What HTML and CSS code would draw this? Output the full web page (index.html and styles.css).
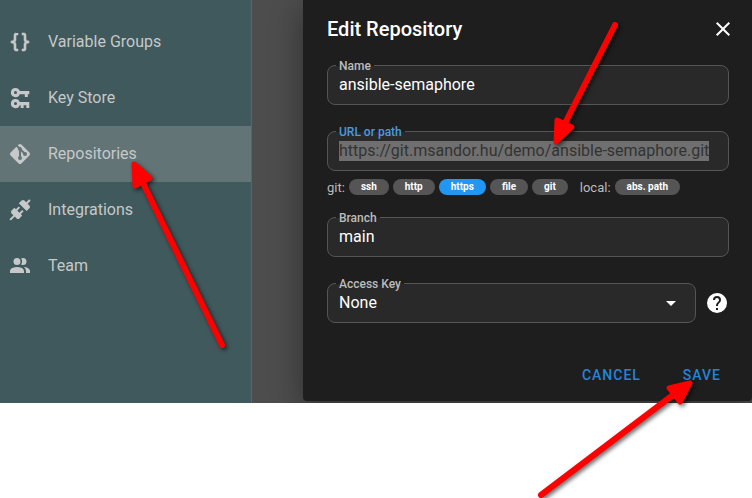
FILE: index.html
```
<!DOCTYPE html>
<html lang="en">
<head>
<meta charset="utf-8">
<title>Edit Repository</title>
<link rel="stylesheet" href="styles.css">
</head>
<body>
<div class="app">
  <nav class="sidebar">
    <a class="nav-item" href="#"><svg class="icon braces" viewBox="0 0 24 24"><path d="M8,3A2,2 0 0,0 6,5V9A2,2 0 0,1 4,11H3V13H4A2,2 0 0,1 6,15V19A2,2 0 0,0 8,21H10V19H8V14A2,2 0 0,0 6,12A2,2 0 0,0 8,10V5H10V3M16,3A2,2 0 0,1 18,5V9A2,2 0 0,0 20,11H21V13H20A2,2 0 0,0 18,15V19A2,2 0 0,1 16,21H14V19H16V14A2,2 0 0,1 18,12A2,2 0 0,1 16,10V5H14V3H16Z"/></svg><span class="nav-text">Variable Groups</span></a>
    <a class="nav-item" href="#"><svg class="icon" viewBox="0 0 24 24"><path fill-rule="evenodd" d="M7.5,2A4.6,4.6 0 0,1 11.8,5H21.3V8.2H19.8V11H16.8V8.2H11.8A4.6,4.6 0 1,1 7.5,2M7.5,5.1A1.5,1.5 0 0,0 7.5,8.1A1.5,1.5 0 0,0 7.5,5.1M7.5,13A4.6,4.6 0 0,1 11.8,16H21.3V22H18.3V19.2H15.6V22H12.7V19.2H11.8A4.6,4.6 0 1,1 7.5,13M7.5,16.1A1.5,1.5 0 0,0 7.5,19.1A1.5,1.5 0 0,0 7.5,16.1Z"/></svg><span class="nav-text">Key Store</span></a>
    <a class="nav-item active" href="#"><svg class="icon" viewBox="0 0 24 24"><path d="M2.6,10.59L8.38,4.8L10.07,6.5C9.83,7.35 10.22,8.28 11,8.73V14.27C10.4,14.61 10,15.26 10,16A2,2 0 0,0 12,18A2,2 0 0,0 14,16C14,15.26 13.6,14.61 13,14.27V9.41L15.07,11.5C15,11.65 15,11.82 15,12A2,2 0 0,0 17,14A2,2 0 0,0 19,12A2,2 0 0,0 17,10C16.82,10 16.65,10 16.5,10.07L13.93,7.5C14.19,6.57 13.71,5.55 12.78,5.16C12.35,5 11.9,4.96 11.5,5.07L9.8,3.38L10.59,2.6C11.37,1.81 12.63,1.81 13.41,2.6L21.4,10.59C22.19,11.37 22.19,12.63 21.4,13.41L13.41,21.4C12.63,22.19 11.37,22.19 10.59,21.4L2.6,13.41C1.81,12.63 1.81,11.37 2.6,10.59Z"/></svg><span class="nav-text">Repositories</span></a>
    <a class="nav-item" href="#"><svg class="icon" viewBox="0 0 24 24"><path d="M21.4 7.5C22.2 8.3 22.2 9.6 21.4 10.3L18.6 13.1L10.8 5.3L13.6 2.5C14.4 1.7 15.7 1.7 16.4 2.5L18.2 4.3L21.2 1.3L22.6 2.7L19.6 5.7L21.4 7.5M15.6 13.3L14.2 11.9L11.4 14.7L9.3 12.6L12.1 9.8L10.7 8.4L7.9 11.2L6.4 9.8L3.6 12.6C2.8 13.4 2.8 14.7 3.6 15.4L5.4 17.2L1.4 21.2L2.8 22.6L6.8 18.6L8.6 20.4C9.4 21.2 10.7 21.2 11.4 20.4L14.2 17.6L12.8 16.2L15.6 13.3Z"/></svg><span class="nav-text">Integrations</span></a>
    <a class="nav-item" href="#"><svg class="icon" viewBox="0 0 24 24"><path d="M16 17V19H2V17S2 13 9 13 16 17 16 17M12.5 7.5A3.5 3.5 0 1 0 9 11A3.5 3.5 0 0 0 12.5 7.5M15.94 13A5.32 5.32 0 0 1 18 17V19H22V17S22 13.37 15.94 13M15 4A3.39 3.39 0 0 0 13.07 4.59A5 5 0 0 1 13.07 10.41A3.39 3.39 0 0 0 15 11A3.5 3.5 0 0 0 15 4Z"/></svg><span class="nav-text">Team</span></a>
  </nav>
  <main class="stage">
    <form class="dialog">
      <header class="dialog-head">
        <h1 class="title">Edit Repository</h1>
        <button class="icon-button" type="button" aria-label="Close"><svg class="icon" viewBox="0 0 24 24"><path d="M19,6.41L17.59,5L12,10.59L6.41,5L5,6.41L10.59,12L5,17.59L6.41,19L12,13.41L17.59,19L19,17.59L13.41,12L19,6.41Z"/></svg></button>
      </header>
      <div class="field">
        <label class="label" for="name">Name</label>
        <input class="control" id="name" type="text" value="ansible-semaphore">
      </div>
      <div class="url-group">
        <div class="field focused">
          <label class="label" for="url">URL or path</label>
          <input class="control selected" id="url" type="text" value="https://git.msandor.hu/demo/ansible-semaphore.git">
        </div>
        <div class="chips">
          <span class="chips-label">git:</span>
          <button class="chip" type="button">ssh</button>
          <button class="chip" type="button">http</button>
          <button class="chip chosen" type="button">https</button>
          <button class="chip" type="button">file</button>
          <button class="chip" type="button">git</button>
          <span class="chips-label local">local:</span>
          <button class="chip" type="button">abs. path</button>
        </div>
      </div>
      <div class="field">
        <label class="label" for="branch">Branch</label>
        <input class="control" id="branch" type="text" value="main">
      </div>
      <div class="key-row">
        <div class="field">
          <label class="label" for="key">Access Key</label>
          <select class="control" id="key"><option>None</option></select>
          <svg class="icon caret" viewBox="0 0 24 24"><path d="M7,10L12,15L17,10H7Z"/></svg>
        </div>
        <button class="icon-button" type="button" aria-label="Help"><svg class="icon" viewBox="0 0 24 24"><path d="M15.07,11.25L14.17,12.17C13.45,12.89 13,13.5 13,15H11V14.5C11,13.39 11.45,12.39 12.17,11.67L13.41,10.41C13.78,10.05 14,9.55 14,9C14,7.89 13.1,7 12,7A2,2 0 0,0 10,9H8A4,4 0 0,1 12,5A4,4 0 0,1 16,9C16,9.88 15.64,10.67 15.07,11.25M13,19H11V17H13M12,2A10,10 0 0,0 2,12A10,10 0 0,0 12,22A10,10 0 0,0 22,12C22,6.47 17.5,2 12,2Z"/></svg></button>
      </div>
      <footer class="actions">
        <button class="action" type="button">CANCEL</button>
        <button class="action" type="button">SAVE</button>
      </footer>
    </form>
  </main>
</div>
<svg class="arrows" width="752" height="498" viewBox="0 0 752 498" aria-hidden="true">
  <g class="arrow"><path class="shaft" d="M222 345L141 179"/><path class="head" d="M134 164L150 178L135 186Z"/></g>
  <g class="arrow"><path class="shaft" d="M615 25L562 129"/><path class="head" d="M556 142L572 127L557 120Z"/></g>
  <g class="arrow"><path class="shaft" d="M541 495L677 392"/><path class="head" d="M690 383L669 388L680 402Z"/></g>
</svg>
</body>
</html>
```
FILE: styles.css
```
* {
  box-sizing: border-box;
}

body {
  margin: 0;
  position: relative;
  min-height: 100vh;
  background: #fff;
  font-family: Roboto, "Liberation Sans", sans-serif;
  font-size: 16px;
}

button,
input,
select {
  margin: 0;
  border: 0;
  padding: 0;
  background: none;
  color: inherit;
  font: inherit;
}

.app {
  display: flex;
  overflow: hidden;
  background: #4d4d4d;
}

.icon {
  flex: none;
  width: 24px;
  height: 24px;
  fill: currentColor;
}

.sidebar {
  flex: none;
  width: 252px;
  padding-top: 14px;
  border-right: 1px solid #4f6a6d;
  background: #40595c;
  color: #c6c8c9;
}

.nav-item {
  display: flex;
  align-items: center;
  gap: 16px;
  height: 56px;
  padding: 0 8px;
  color: inherit;
  text-decoration: none;
}

.nav-text {
  padding-bottom: 2px;
}

.braces {
  stroke: currentColor;
  stroke-width: 0.6px;
}

.nav-item.active {
  background: #627476;
}

.stage {
  flex: 1;
  padding: 0 0 2px 51px;
}

.dialog {
  display: flex;
  flex-direction: column;
  gap: 26px;
  padding: 9px 23px 0 24px;
  border-radius: 0 0 4px 4px;
  background: #1e1e1e;
  box-shadow: 0 8px 32px rgba(0, 0, 0, 0.4);
  color: #fff;
}

.dialog-head {
  display: flex;
  align-items: center;
  justify-content: space-between;
  height: 40px;
  margin-bottom: -10px;
}

.title {
  margin: 0;
  font-size: 20px;
  font-weight: 500;
}

.icon-button {
  display: flex;
  flex: none;
}

.dialog-head .icon-button {
  margin-right: -6px;
}

.field {
  position: relative;
  display: flex;
  align-items: center;
  height: 40px;
  padding: 0 11px;
  border: 1px solid #555;
  border-radius: 8px;
  background: #292929;
}

.label {
  position: absolute;
  top: -8px;
  left: 8px;
  padding: 0 3px;
  background: linear-gradient(#1e1e1e 8px, #292929 8px);
  color: #bbb;
  font-size: 12px;
  font-weight: 500;
  line-height: 16px;
}

.focused .label {
  color: #4a9be0;
}

.control {
  width: 100%;
  height: 20px;
  outline: 0;
  padding-bottom: 2px;
  appearance: none;
}

.selected {
  width: auto;
  field-sizing: content;
  background: #6f6f6f;
  color: #333;
}

.caret {
  position: absolute;
  right: 12px;
  pointer-events: none;
}

.chips {
  display: flex;
  align-items: center;
  gap: 4px;
  height: 20px;
  margin-top: 6px;
}

.chips-label {
  color: #bbb;
  font-size: 13px;
}

.local {
  margin-left: 8px;
}

.chip {
  height: 16px;
  padding: 0 12px;
  border-radius: 8px;
  background: #555;
  font-size: 10px;
  font-weight: 700;
  line-height: 16px;
}

.chip.chosen {
  background: #2196f3;
}

.url-group {
  margin-bottom: -6px;
}

.key-row {
  display: flex;
  align-items: center;
  gap: 9px;
}

.key-row .field {
  flex: 1;
}

.actions {
  display: flex;
  justify-content: flex-end;
  gap: 42px;
  padding: 8px;
}

.action {
  height: 36px;
  color: #2185dd;
  font-size: 14px;
  font-weight: 500;
  letter-spacing: 1px;
}

.arrows {
  position: absolute;
  top: 0;
  left: 0;
  pointer-events: none;
}

.arrow {
  fill: red;
  stroke: red;
  stroke-linecap: round;
  stroke-linejoin: round;
  filter: drop-shadow(2px 2px 2px rgba(0, 0, 0, 0.6));
}

.shaft {
  stroke-width: 6px;
}

.head {
  stroke-width: 5px;
}
```
